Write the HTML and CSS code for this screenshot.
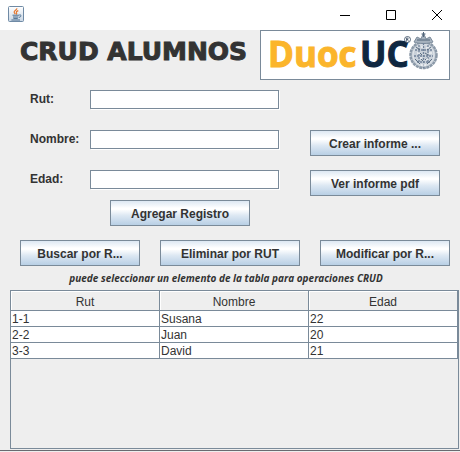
FILE: index.html
```html
<!DOCTYPE html>
<html lang="es">
<head>
<meta charset="utf-8">
<title>CRUD Alumnos</title>
<link rel="stylesheet" href="styles.css">
</head>
<body>
<div class="titlebar">
  <svg class="app-icon" width="16" height="16" viewBox="0 0 16 16" aria-hidden="true">
    <defs><linearGradient id="tile" x1="0" y1="0" x2="0" y2="1"><stop offset="0" stop-color="#fff"/><stop offset="1" stop-color="#c9d6e4"/></linearGradient></defs>
    <rect x=".5" y=".5" width="15" height="15" rx="1" fill="url(#tile)" stroke="#6f8aa5"/>
    <path d="M8.8 2.2C9.4 4 5.5 4.6 6.2 6.4 6.5 7.2 7 7.6 7.4 8.2M10.3 4.6C8.6 5.2 7.8 6 8.6 7 9 7.6 8.6 8.1 8.2 8.5" fill="none" stroke="#e5762c" stroke-width="1.2"/>
    <path d="M4.5 9.2h6.5M5 11h5.4M5.4 12.4h4.4M3.4 14h8.6M11.2 9c2.6-.6 2.4 2-.3 2.4" fill="none" stroke="#4c6e90"/>
  </svg>
  <div class="window-controls">
    <button type="button" aria-label="Minimizar"><svg width="12" height="12" viewBox="0 0 12 12"><path d="M1 6.500h10"/></svg></button>
    <button type="button" aria-label="Maximizar"><svg width="12" height="12" viewBox="0 0 12 12"><path d="M1.500 1.500h9v9h-9z"/></svg></button>
    <button type="button" aria-label="Cerrar"><svg width="12" height="12" viewBox="0 0 12 12"><path d="M1 1l10 10M11 1L1 11"/></svg></button>
  </div>
</div>
<main>
  <header class="heading">
    <h1>CRUD ALUMNOS</h1>
    <div class="logo">
      <svg width="188" height="48" viewBox="0 0 188 48" role="img" aria-label="Duoc UC">
        <text class="duoc" x="7" y="36">Duoc</text>
        <text class="uc" x="99" y="36">UC</text>
        <circle cx="146.500" cy="8.500" r="3" fill="#fff" stroke="#34485e" stroke-width=".8"/>
        <path d="M145.500 10.500v-3.500h1.500v1.500h-1.500M146.500 8.500l1 2" fill="none" stroke="#34485e" stroke-width=".7"/>
        <g fill="none" stroke="#7c8b9b">
          <circle cx="162.500" cy="24" r="13" fill="#c9d1d9" stroke="#8b99a8" stroke-width="2.500" stroke-dasharray="3 .6"/>
          <circle cx="162.500" cy="24" r="10.500" stroke="#e6eaee" stroke-width=".8"/>
          <path d="M153 11c4 2 15 2 19 0l-3-5-4 2-2.500-6-2.500 6-4-2z" fill="#a5b1bd"/>
          <path d="M162.500 1v5M160.500 3h4M156 9h13" stroke="#52667a"/>
          <path d="M154 19h17M153 25h19M156 31h13M158 14v18M162.500 12v25M167 14v18" stroke="#71839a" stroke-width="1.300" stroke-dasharray="2 1"/>
          <path d="M155 16l4 3M170 16l-4 3M154 28l5 5M171 28l-5 5M159 22l2 2M164 22l3 2M160 28l2 2M164 29l2-2" stroke="#5c6f82"/>
          <path d="M156 22h3M165 17h3M160 34h5M168 22h3M160 16h2M159 27h2M165 28h2" stroke="#fff"/>
        </g>
      </svg>
    </div>
  </header>
  <form class="editor">
    <div class="fields">
      <div class="field"><label for="rut">Rut:</label><input id="rut" type="text"></div>
      <div class="field"><label for="nombre">Nombre:</label><input id="nombre" type="text"></div>
      <div class="field"><label for="edad">Edad:</label><input id="edad" type="text"></div>
      <button class="btn add" type="button">Agregar Registro</button>
    </div>
    <div class="reports">
      <button class="btn" type="button">Crear informe ...</button>
      <button class="btn" type="button">Ver informe pdf</button>
    </div>
  </form>
  <div class="actions">
    <button class="btn" type="button">Buscar por R...</button>
    <button class="btn" type="button">Eliminar por RUT</button>
    <button class="btn" type="button">Modificar por R...</button>
  </div>
  <p class="hint">puede seleccionar un elemento de la tabla para operaciones CRUD</p>
  <div class="table-pane">
    <table>
      <thead><tr><th>Rut</th><th>Nombre</th><th>Edad</th></tr></thead>
      <tbody>
        <tr><td>1-1</td><td>Susana</td><td>22</td></tr>
        <tr><td>2-2</td><td>Juan</td><td>20</td></tr>
        <tr><td>3-3</td><td>David</td><td>21</td></tr>
      </tbody>
    </table>
  </div>
</main>
</body>
</html>
```
FILE: styles.css
```css
* { box-sizing: border-box; }

body {
  margin: 0;
  min-height: 100vh;
  display: flex;
  flex-direction: column;
  background: #eee;
  color: #333;
  font: 12px/16px "Liberation Sans", Arial, sans-serif;
}

.titlebar {
  display: flex;
  align-items: center;
  justify-content: space-between;
  height: 30px;
  padding-left: 8px;
  background: #fff;
}

.app-icon { margin-top: -2px; }

.window-controls { display: flex; }

.window-controls button {
  display: flex;
  align-items: center;
  justify-content: center;
  width: 46px;
  height: 28px;
  padding: 0;
  border: 0;
  background: none;
}

.window-controls path { fill: none; stroke: #000; }

main {
  flex: 1;
  display: flex;
  flex-direction: column;
  border-bottom: 1px solid #6a6a70;
  margin-bottom: 1px;
}

.heading {
  display: flex;
  justify-content: space-between;
  padding: 0 10px 0 20px;
}

h1 {
  margin: 0;
  font: bold 25px/44px "DejaVu Sans", sans-serif;
  -webkit-text-stroke: 1px #333;
  white-space: nowrap;
}

.logo {
  display: flex;
  border: 1px solid #7a8a99;
  background: #fff;
}

.duoc, .uc { font: bold 35px "Open Sans", sans-serif; stroke-width: 1px; }
.duoc { fill: #fbb52b; stroke: #fbb52b; }
.uc { fill: #0f2740; stroke: #0f2740; }

.editor {
  display: flex;
  gap: 30px;
  padding: 10px 20px 0 30px;
}

.fields {
  flex: 1;
  display: flex;
  flex-direction: column;
  gap: 20px;
}

.field {
  display: flex;
  height: 20px;
}

label {
  width: 60px;
  font-weight: bold;
  line-height: 18px;
}

input {
  flex: 1;
  min-width: 0;
  height: 19px;
  margin-right: 1px;
  padding: 0 2px;
  border: 1px solid #7a8a99;
  box-shadow: 1px 1px 0 #fff;
  background: #fff;
  font: inherit;
}

.btn {
  height: 26px;
  padding: 2px 0 0;
  border: 1px solid #7a8a99;
  background: linear-gradient(#dde8f3, #fff 30%, #fff 35%, #dde8f3 60%, #b8cfe5);
  color: #333;
  font: bold 12px/16px "Liberation Sans", Arial, sans-serif;
  white-space: nowrap;
}

.add {
  width: 140px;
  margin: -10px 0 0 80px;
}

.reports {
  display: flex;
  flex-direction: column;
  gap: 14px;
  width: 130px;
  padding-top: 40px;
}

.actions {
  display: grid;
  grid-template-columns: 12fr 14fr 13fr;
  gap: 20px;
  padding: 14px 10px 0 20px;
}

.hint {
  margin: 0;
  padding-right: 8px;
  font: italic bold 10px/24px "Open Sans", sans-serif;
  text-align: center;
}

.table-pane {
  flex: 1;
  margin: 0 1px 1px 10px;
  border: 1px solid #7a8a99;
}

table {
  width: 100%;
  table-layout: fixed;
  border-spacing: 0;
}

th, td {
  height: 16px;
  padding: 1px 1px 0;
  border: solid #7a8a99;
  border-width: 0 1px 1px 0;
  font-weight: normal;
  line-height: 14px;
  text-align: left;
}

th {
  height: 20px;
  padding-top: 3px;
  text-align: center;
  box-shadow: inset 1px 1px 0 #fff;
}

td { background: #fff; }
```
